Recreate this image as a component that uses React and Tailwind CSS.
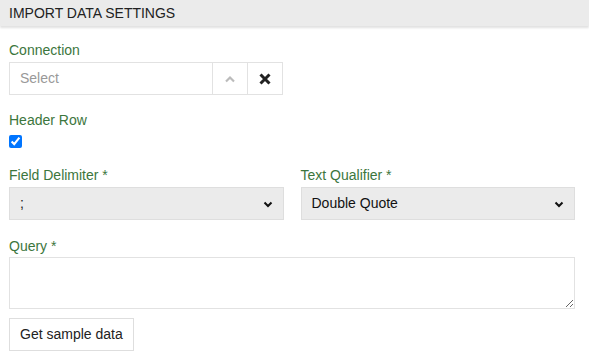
import React from "react";

const labelCls = "block text-[14px] leading-[16px] text-[#3c763d]";

const Chevron = () => (
  <svg width="12" height="12" viewBox="0 0 12 12" className="pointer-events-none">
    <path d="M2.5 4.5 L6 8 L9.5 4.5" fill="none" stroke="#111" strokeWidth="2" />
  </svg>
);

export default function App() {
  return (
    <div
      className="w-[589px] h-[362px] bg-white text-[14px] text-[#222]"
      style={{ fontFamily: '"Liberation Sans", Arial, sans-serif' }}
    >
      {/* HEADER */}
      <div className="h-[26px] bg-[#ebebeb] shadow-[0_2px_2px_rgba(0,0,0,0.12)] pl-[9px] flex items-center">
        <span className="text-[14px] text-[#222] leading-none">IMPORT DATA SETTINGS</span>
      </div>

      <div className="pl-[9px] pr-[14px]">
        {/* CONNECTION */}
        <div className="pt-[16px]">
          <label className={labelCls}>Connection</label>
          <div className="mt-[4px] w-[274px] h-[33px] border border-[#e2e2e2] flex">
            <div className="flex-1 flex items-center pl-[10px] text-[#999]">Select</div>
            <div className="w-[35px] border-l border-[#e2e2e2] flex items-center justify-center">
              <svg width="14" height="10" viewBox="0 0 14 10">
                <path d="M3 7.5 L7 3.5 L11 7.5" fill="none" stroke="#bbb" strokeWidth="2.2" />
              </svg>
            </div>
            <div className="w-[35px] border-l border-[#e2e2e2] flex items-center justify-center">
              <svg width="14" height="14" viewBox="0 0 14 14">
                <path d="M2.5 2.5 L11.5 11.5 M11.5 2.5 L2.5 11.5" stroke="#222" strokeWidth="3" />
              </svg>
            </div>
          </div>
        </div>

        {/* HEADER ROW */}
        <div className="pt-[17px]">
          <label className={labelCls}>Header Row</label>
          <div className="mt-[7px] h-[13px] flex items-center">
            <input type="checkbox" defaultChecked className="w-[13px] h-[13px] m-0 accent-[#0075ff]" />
          </div>
        </div>

        {/* DELIMITERS */}
        <div className="pt-[19px] grid grid-cols-2 gap-x-[17px]">
          <div>
            <label className={labelCls}>Field Delimiter *</label>
            <div className="mt-[4px] h-[33px] bg-[#ebebeb] border border-[#dedede] flex items-center justify-between pl-[10px] pr-[9px]">
              <span className="text-[#222]">;</span>
              <Chevron />
            </div>
          </div>
          <div>
            <label className={labelCls}>Text Qualifier *</label>
            <div className="mt-[4px] h-[33px] bg-[#ebebeb] border border-[#dedede] flex items-center justify-between pl-[10px] pr-[9px]">
              <span className="text-[#111]">Double Quote</span>
              <Chevron />
            </div>
          </div>
        </div>

        {/* QUERY */}
        <div className="pt-[18px]">
          <label className={labelCls}>Query *</label>
          <textarea className="mt-[3px] block w-full h-[52px] border border-[#e2e2e2] resize-y outline-none" />
        </div>

        <button className="mt-[9px] h-[33px] px-[10px] border border-[#dedede] bg-white text-[#222] text-[14px]">
          Get sample data
        </button>
      </div>
    </div>
  );
}
